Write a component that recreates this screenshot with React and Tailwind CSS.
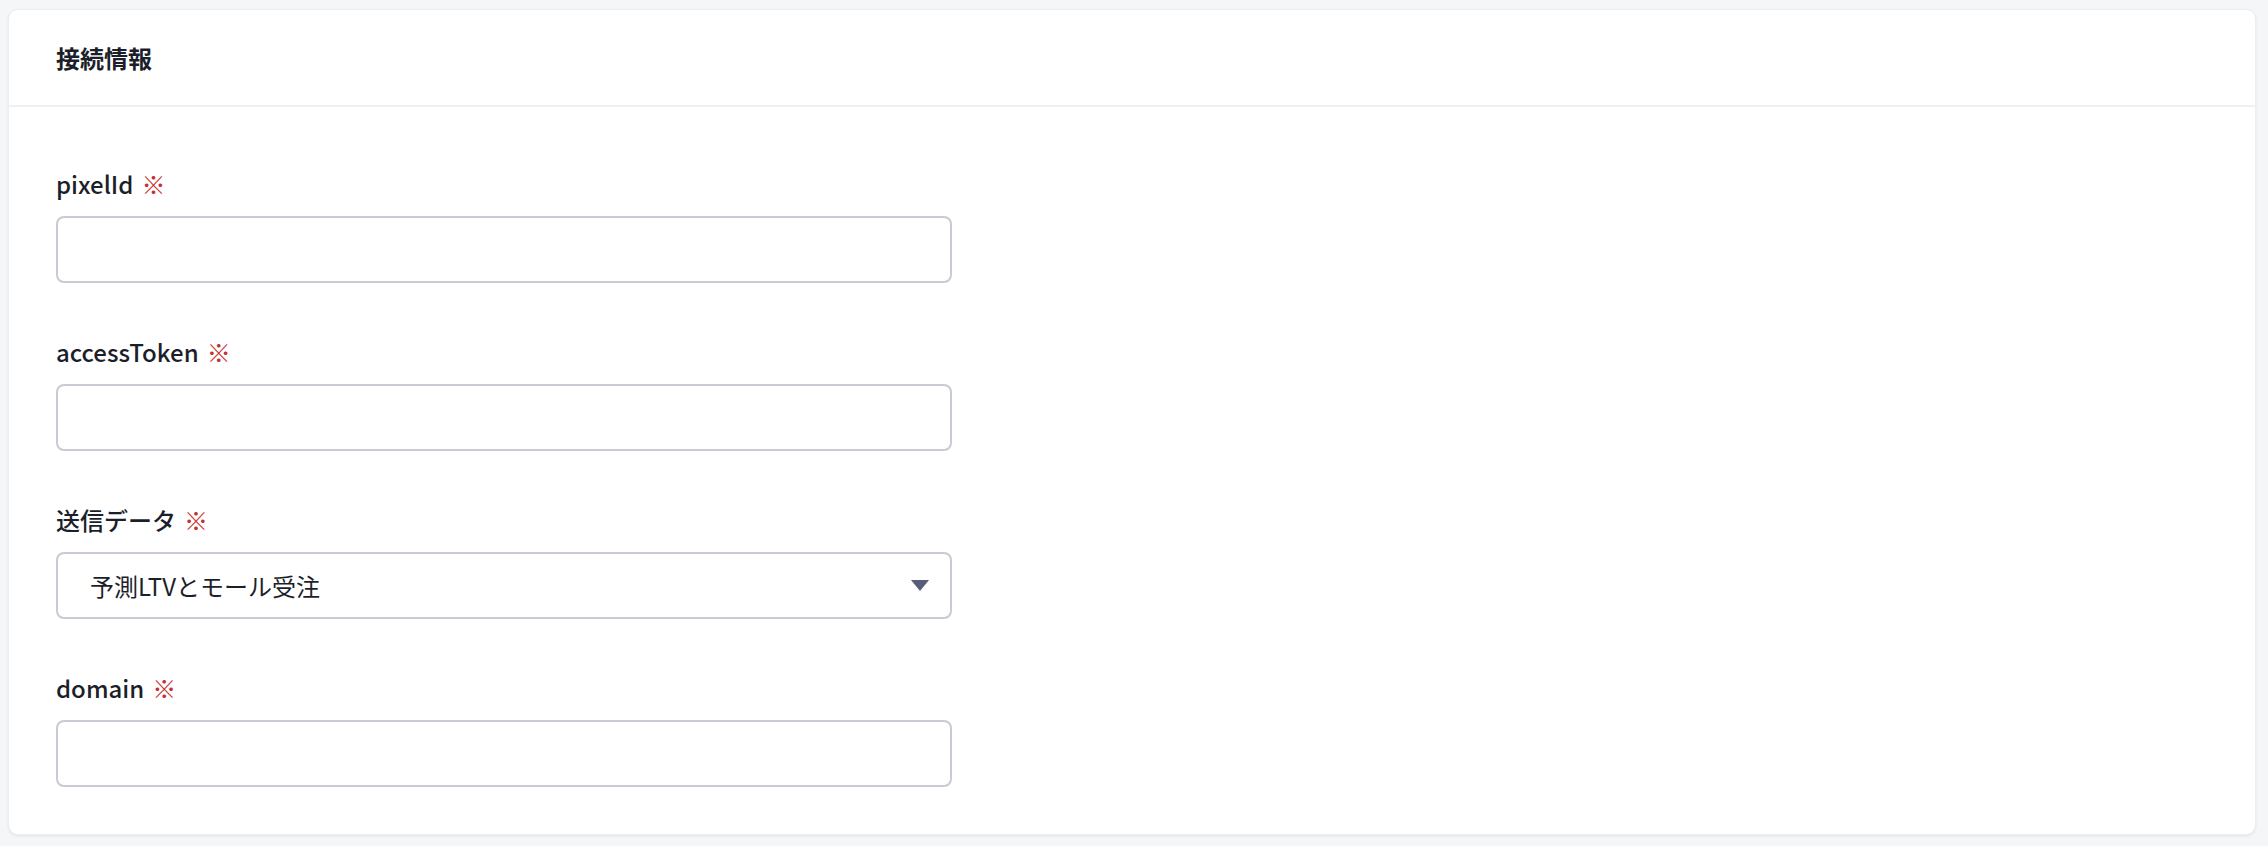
import React from 'react'

const fields = [
    { id: 'pixelId', label: 'pixelId', type: 'text' },
    { id: 'accessToken', label: 'accessToken', type: 'text' },
    { id: 'sendData', label: '送信データ', type: 'select', value: '予測LTVとモール受注' },
    { id: 'domain', label: 'domain', type: 'text' },
]

function Field({ field }) {
    return (
        <div className="flex flex-col">
            <label className="flex items-center h-[36px] text-[24px] leading-[36px] font-medium text-[#1c1f2a]">
                <span>{field.label}</span>
                <span className="ml-[8px] font-normal text-[#c62f2f]">※</span>
            </label>
            {field.type === 'select' ? (
                <div className="mt-[14px] h-[67px] w-[896px] rounded-[8px] border-2 border-[#c9cad3] bg-white flex items-center justify-between pl-[32px] pr-[21px]">
                    <span className="text-[24px] text-[#1c1f2a]">{field.value}</span>
                    <svg width="18" height="11" viewBox="0 0 18 11">
                        <path d="M0 0 L18 0 L9 11 Z" fill="#575c78" />
                    </svg>
                </div>
            ) : (
                <input
                    type="text"
                    className="mt-[14px] h-[67px] w-[896px] rounded-[8px] border-2 border-[#c9cad3] bg-white px-[16px] text-[24px] outline-none"
                />
            )}
        </div>
    )
}

export default function App() {
    return (
        <div
            className="min-h-[846px] bg-[#f5f6f8] pt-[9px] pl-[8px] pr-[12px] pb-[10px]"
            style={{ fontFamily: '"Noto Sans CJK JP", "Noto Sans", sans-serif' }}
        >
            <div className="bg-white rounded-[10px] border border-[#eceef1] shadow-[0_1px_3px_rgba(0,0,0,0.08)]">
                <div className="h-[97px] flex items-center px-[47px] border-b-2 border-[#eff0f3]">
                    <h1 className="text-[24px] font-bold text-[#1c1f2a]">接続情報</h1>
                </div>
                <div className="pl-[47px] pt-[59px] pb-[47px] flex flex-col gap-[51px]">
                    {fields.map(f => (
                        <Field key={f.id} field={f} />
                    ))}
                </div>
            </div>
        </div>
    )
}
